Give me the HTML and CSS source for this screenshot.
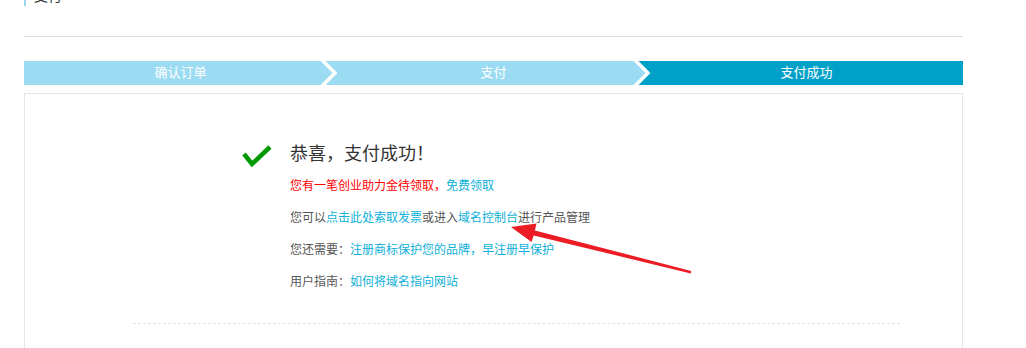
FILE: index.html
```html
<!DOCTYPE html>
<html lang="zh-CN">
<head>
    <meta charset="UTF-8">
    <title>支付成功</title>
    <link rel="stylesheet" href="styles.css">
</head>
<body>

<div class="page">
    <div class="page-title">支付</div>
    <div class="title-line"></div>

    <div class="steps">
        <div class="step">
            确认订单
            <svg class="chevron" viewBox="0 0 18 24" width="18" height="24">
                <polyline points="3,-1 16,12 3,25" fill="none" stroke="#fff" stroke-width="3.5"/>
            </svg>
        </div>
        <div class="step">
            支付
            <svg class="chevron" viewBox="0 0 18 24" width="18" height="24">
                <polygon points="3,0 18,0 18,24 3,24 16,12" fill="#00a1c9"/>
                <polyline points="3,-1 16,12 3,25" fill="none" stroke="#fff" stroke-width="3.5"/>
            </svg>
        </div>
        <div class="step current">支付成功</div>
    </div>

    <div class="result-box">
        <div class="result">
            <svg class="check" viewBox="0 0 30 24" width="30" height="24">
                <polyline points="2,10 10,20 28,3" fill="none" stroke="#009a00" stroke-width="4.5"/>
            </svg>
            <div class="result-text">
                <h3>恭喜，支付成功！</h3>
                <p class="notice">您有一笔创业助力金待领取，<a href="#">免费领取</a></p>
                <p>您可以<a href="#">点击此处索取发票</a>或进入<a href="#">域名控制台</a>进行产品管理</p>
                <p>您还需要：<a href="#">注册商标保护您的品牌，早注册早保护</a></p>
                <p>用户指南：<a href="#">如何将域名指向网站</a></p>
            </div>
        </div>
        <div class="dash-line"></div>
    </div>
</div>

<!-- annotation arrow drawn over the page -->
<svg class="mark-arrow" viewBox="0 0 1026 348" width="1026" height="348">
    <polygon points="511,227 536.5,223.5 534.9,230.4 691.2,271 690.8,273.4 533.7,235.4 531.5,242" fill="#ec1c24"/>
</svg>

</body>
</html>
```

FILE: styles.css
```css
body {
    margin: 0;
    padding: 0;
    background-color: #fff;
    font-family: "Liberation Sans", "Noto Sans CJK SC", sans-serif;
    font-size: 12px;
    color: #555;
    overflow: hidden;
}

.page {
    width: 939px;
    margin-left: 24px;
}

.page-title {
    margin-top: -14px;
    height: 20px;
    line-height: 20px;
    font-size: 14px;
    color: #333;
    border-left: 2px solid #9bd6f0;
    padding-left: 8px;
}

.title-line {
    margin-top: 30px;
    border-top: 1px solid #ddd;
}

.steps {
    display: flex;
    margin-top: 24px;
    height: 24px;
}

.step {
    position: relative;
    flex: 1;
    background-color: #9bdcf3;
    color: #fff;
    font-size: 13px;
    line-height: 24px;
    text-align: center;
}

.step.current {
    background-color: #00a1c9;
}

.chevron {
    position: absolute;
    top: 0;
    right: 0;
    display: block;
}

.result-box {
    margin-top: 8px;
    border: 1px solid #e6e6e6;
    padding-top: 48px;
    height: 300px;
}

.result {
    display: flex;
    gap: 18px;
    padding-left: 217px;
}

.check {
    display: block;
    margin-top: 2px;
}

.result-text h3 {
    margin: 0;
    font-size: 18px;
    font-weight: normal;
    line-height: 24px;
    color: #333;
}

.result-text p {
    margin: 12px 0 0 0;
    line-height: 20px;
}

.result-text p.notice {
    margin-top: 10px;
    color: #f00;
}

.result-text a {
    color: #0cb0d8;
    text-decoration: none;
}

.dash-line {
    margin: 31px 62px 0 108px;
    border-top: 1px dashed #e2e2e2;
}

.mark-arrow {
    position: absolute;
    top: 0;
    left: 0;
    pointer-events: none;
}
```
